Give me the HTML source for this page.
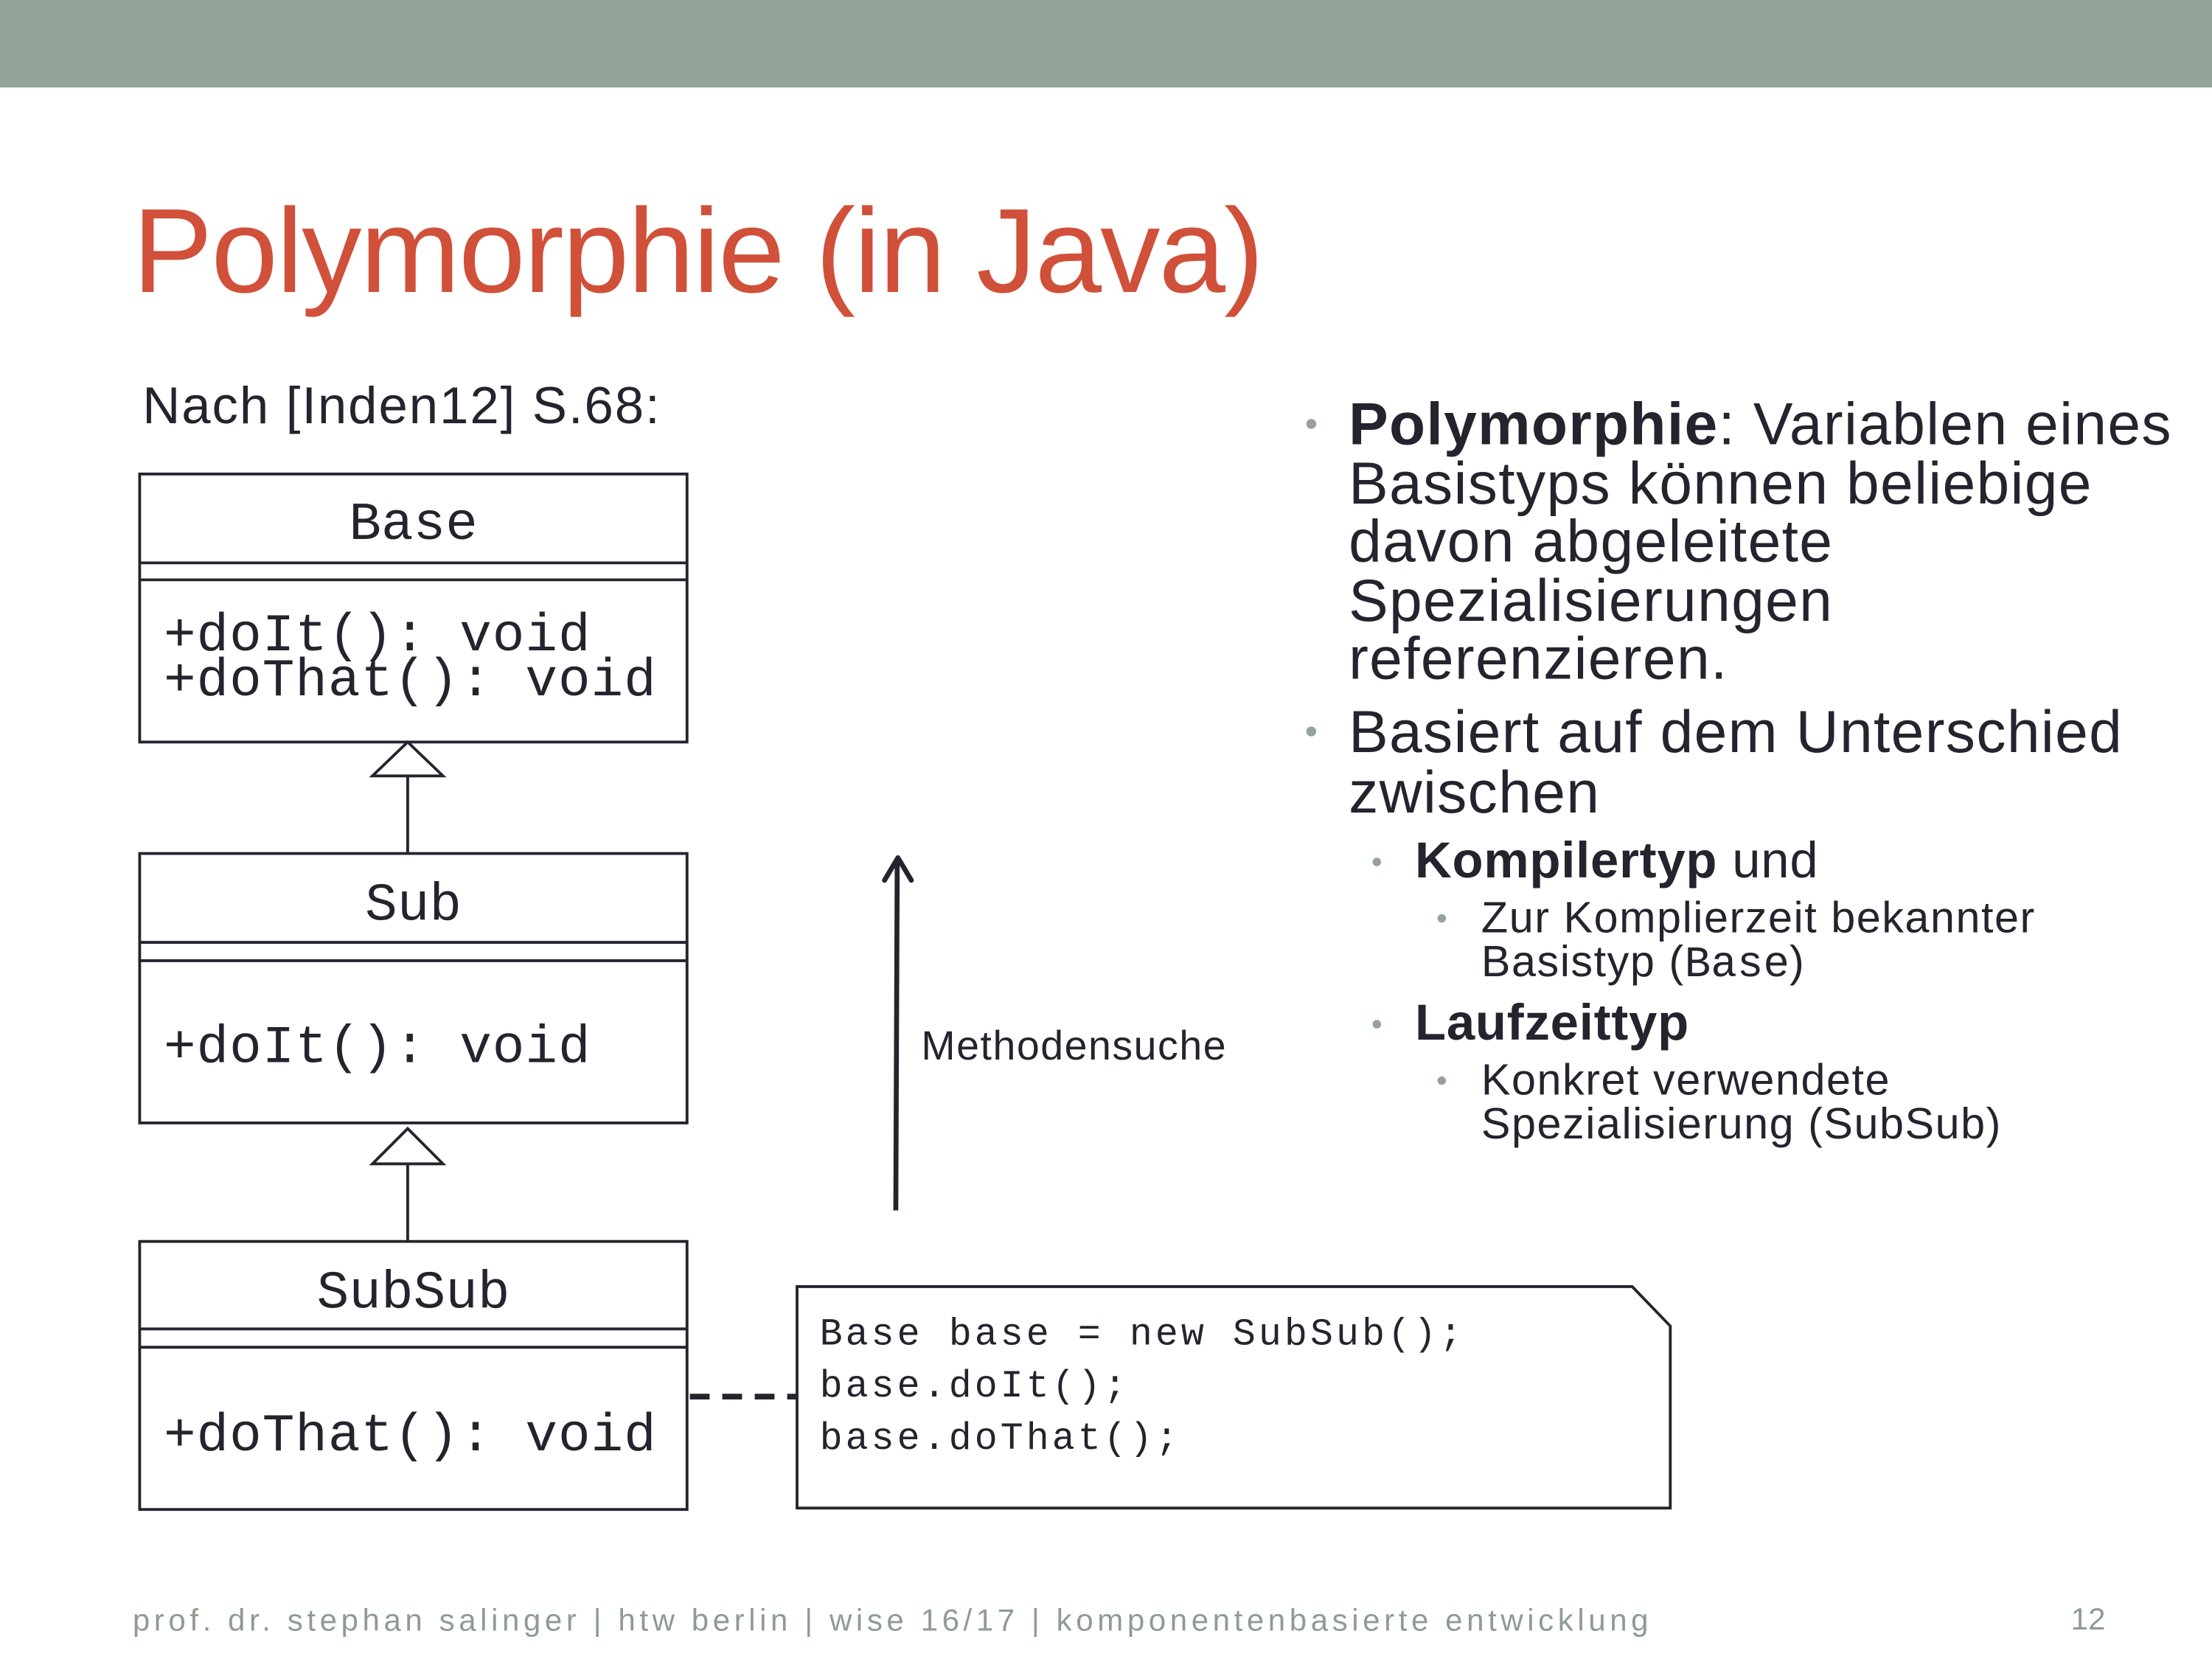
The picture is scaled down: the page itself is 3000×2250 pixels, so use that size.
<!DOCTYPE html>
<html><head><meta charset="utf-8"><style>
html,body{margin:0;padding:0;background:#fff;}
body{width:3000px;height:2250px;overflow:hidden;position:relative;}
#s{position:absolute;left:0;top:0;width:1568px;height:1176px;transform:scale(1.91327);transform-origin:0 0;}
.t{position:absolute;white-space:nowrap;font-family:"Liberation Sans",sans-serif;color:#24242f;}
.m{position:absolute;white-space:nowrap;font-family:"Liberation Mono",monospace;color:#24242f;}
.b{position:absolute;width:7px;height:7px;border-radius:50%;background:#93a398;}
</style></head><body><div id="s">
<div style="position:absolute;left:0;top:0;width:1568px;height:62px;background:#93a398"></div>
<div class="t" style="left:94px;top:136px;font-size:85px;line-height:85px;color:#d0503a;letter-spacing:-1px">Polymorphie (in Java)</div>
<div class="t" style="left:101px;top:269px;font-size:37px;line-height:37px;letter-spacing:1px">Nach [Inden12] S.68:</div>

<svg style="position:absolute;left:0;top:0" width="1568" height="1176">
<g fill="none" stroke="#24242f" stroke-width="2">
<rect x="99" y="336" width="388" height="190"/>
<line x1="99" y1="399" x2="487" y2="399"/><line x1="99" y1="411" x2="487" y2="411"/>
<polygon points="289,526 264,550 314,550" fill="#fff"/>
<line x1="289" y1="550" x2="289" y2="605"/>
<rect x="99" y="605" width="388" height="191"/>
<line x1="99" y1="668" x2="487" y2="668"/><line x1="99" y1="681" x2="487" y2="681"/>
<polygon points="289,800 264,825 314,825" fill="#fff"/>
<line x1="289" y1="825" x2="289" y2="880"/>
<rect x="99" y="880" width="388" height="190"/>
<line x1="99" y1="942" x2="487" y2="942"/><line x1="99" y1="955" x2="487" y2="955"/>
<path d="M565 912 H1157 L1184 940 V1069 H565 Z"/>
<line x1="489" y1="990" x2="565" y2="990" stroke-width="4" stroke-dasharray="14 9"/>
<line x1="635" y1="858" x2="636" y2="610" stroke-width="3.5"/>
<path d="M627 624 L636.5 608 L646 624" stroke-width="3.5" stroke-linecap="round" stroke-linejoin="round"/>
</g></svg>

<div class="m" style="left:99px;width:388px;text-align:center;top:354px;font-size:38px;line-height:38px">Base</div>
<div class="m" style="left:116px;top:436px;font-size:38px;line-height:32px;letter-spacing:0.5px">+doIt(): void<br>+doThat(): void</div>
<div class="m" style="left:99px;width:388px;text-align:center;top:624px;font-size:38px;line-height:38px">Sub</div>
<div class="m" style="left:116px;top:725px;font-size:38px;line-height:38px;letter-spacing:0.5px">+doIt(): void</div>
<div class="m" style="left:99px;width:388px;text-align:center;top:899px;font-size:38px;line-height:38px">SubSub</div>
<div class="m" style="left:116px;top:1000px;font-size:38px;line-height:38px;letter-spacing:0.5px">+doThat(): void</div>
<div class="m" style="left:581px;top:929px;font-size:27px;line-height:37px;letter-spacing:2.1px">Base base = new SubSub();<br>base.doIt();<br>base.doThat();</div>
<div class="t" style="left:653px;top:728px;font-size:29px;line-height:29px;letter-spacing:0.8px">Methodensuche</div>

<div class="b" style="left:926px;top:297px"></div>
<div class="t" style="left:956px;top:280px;font-size:42px;line-height:41.5px;letter-spacing:0.7px"><b>Polymorphie</b>: Variablen eines<br>Basistyps können beliebige<br>davon abgeleitete<br>Spezialisierungen<br>referenzieren.</div>
<div class="b" style="left:926px;top:515px"></div>
<div class="t" style="left:956px;top:497px;font-size:42px;line-height:43px;letter-spacing:0.7px">Basiert auf dem Unterschied<br>zwischen</div>
<div class="b" style="left:973px;top:608px;width:6px;height:6px"></div>
<div class="t" style="left:1003px;top:592px;font-size:36px;line-height:36px;letter-spacing:0.4px"><b>Kompilertyp</b> und</div>
<div class="b" style="left:1019px;top:648px;width:6px;height:6px"></div>
<div class="t" style="left:1050px;top:635px;font-size:31px;line-height:31px;letter-spacing:0.8px">Zur Komplierzeit bekannter<br>Basistyp (<span style="font-family:'Liberation Mono',monospace;letter-spacing:0">Base</span>)</div>
<div class="b" style="left:973px;top:723px;width:6px;height:6px"></div>
<div class="t" style="left:1003px;top:707px;font-size:36px;line-height:36px;letter-spacing:0.4px"><b>Laufzeittyp</b></div>
<div class="b" style="left:1019px;top:763px;width:6px;height:6px"></div>
<div class="t" style="left:1050px;top:750px;font-size:31px;line-height:31px;letter-spacing:0.8px">Konkret verwendete<br>Spezialisierung (SubSub)</div>

<div class="t" style="left:94px;top:1138px;font-size:22px;line-height:22px;color:#8e9c92;letter-spacing:2.9px">prof. dr. stephan salinger | htw berlin | wise 16/17 | komponentenbasierte entwicklung</div>
<div class="t" style="left:1468px;top:1137px;font-size:22px;line-height:22px;color:#8e9c92">12</div>
</div></body></html>
